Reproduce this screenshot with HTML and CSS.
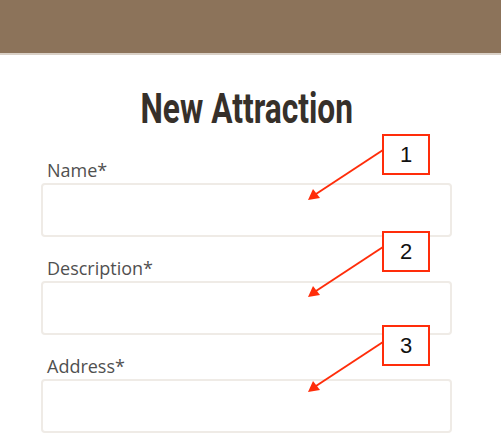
FILE: index.html
```html
<!DOCTYPE html>
<html>
<head>
<meta charset="utf-8">
<link rel="stylesheet" href="styles.css">
</head>
<body>
<header class="topbar"></header>
<main class="page">
  <h1 class="title"><span class="title-text">New Attraction</span></h1>
  <form class="form">
    <div class="field">
      <label class="label">Name*</label>
      <input class="input" type="text">
    </div>
    <div class="field">
      <label class="label">Description*</label>
      <input class="input" type="text">
    </div>
    <div class="field">
      <label class="label">Address*</label>
      <input class="input" type="text">
    </div>
  </form>
  <svg class="arrows" width="501" height="445" viewBox="0 0 501 445">
    <g stroke="#ff2d0a" stroke-width="2" fill="#ff2d0a">
      <line x1="383" y1="150" x2="316" y2="194"/>
      <polygon points="308,200 313,189 320,198" stroke="none"/>
      <line x1="383" y1="247" x2="316" y2="291"/>
      <polygon points="308,297 313,286 320,295" stroke="none"/>
      <line x1="383" y1="342" x2="316" y2="386"/>
      <polygon points="308,392 313,381 320,390" stroke="none"/>
    </g>
  </svg>
  <div class="callout c1">1</div>
  <div class="callout c2">2</div>
  <div class="callout c3">3</div>
</main>
</body>
</html>
```
FILE: styles.css
```css
html, body {
  margin: 0;
  padding: 0;
  background: #fff;
  overflow: hidden;
}
.topbar {
  height: 53px;
  background: #8c735a;
  border-bottom: 2px solid #d9d0c6;
}
.page {
  position: relative;
  box-sizing: border-box;
  height: 390px;
  padding: 32px 49px 0 41px;
}
.title {
  margin: 0;
  text-align: center;
  font-family: "Roboto", sans-serif;
  font-weight: bold;
  font-size: 42px;
  line-height: 44px;
  color: #36302a;
}
.title-text {
  display: inline-block;
  transform: scaleX(0.755);
}
.form {
  display: flex;
  flex-direction: column;
  gap: 20px;
  margin-top: 28px;
}
.field {
  display: flex;
  flex-direction: column;
}
.label {
  font-family: "Open Sans", sans-serif;
  font-size: 18px;
  line-height: 22px;
  color: #505050;
  padding-left: 6px;
  margin-bottom: 2px;
}
.input {
  box-sizing: border-box;
  height: 54px;
  width: 100%;
  border: 2px solid #efebe6;
  border-radius: 4px;
  background: #fff;
  margin: 0;
}
.arrows {
  position: absolute;
  left: 0;
  top: -55px;
  pointer-events: none;
}
.callout {
  position: absolute;
  left: 382px;
  width: 48px;
  height: 41px;
  box-sizing: border-box;
  border: 2px solid #ff2d0a;
  background: #fff;
  font-family: "Liberation Sans", Arial, sans-serif;
  font-size: 22px;
  color: #111;
  display: flex;
  align-items: center;
  justify-content: center;
}
.c1 { top: 79px; }
.c2 { top: 176px; }
.c3 { top: 270px; }
```
